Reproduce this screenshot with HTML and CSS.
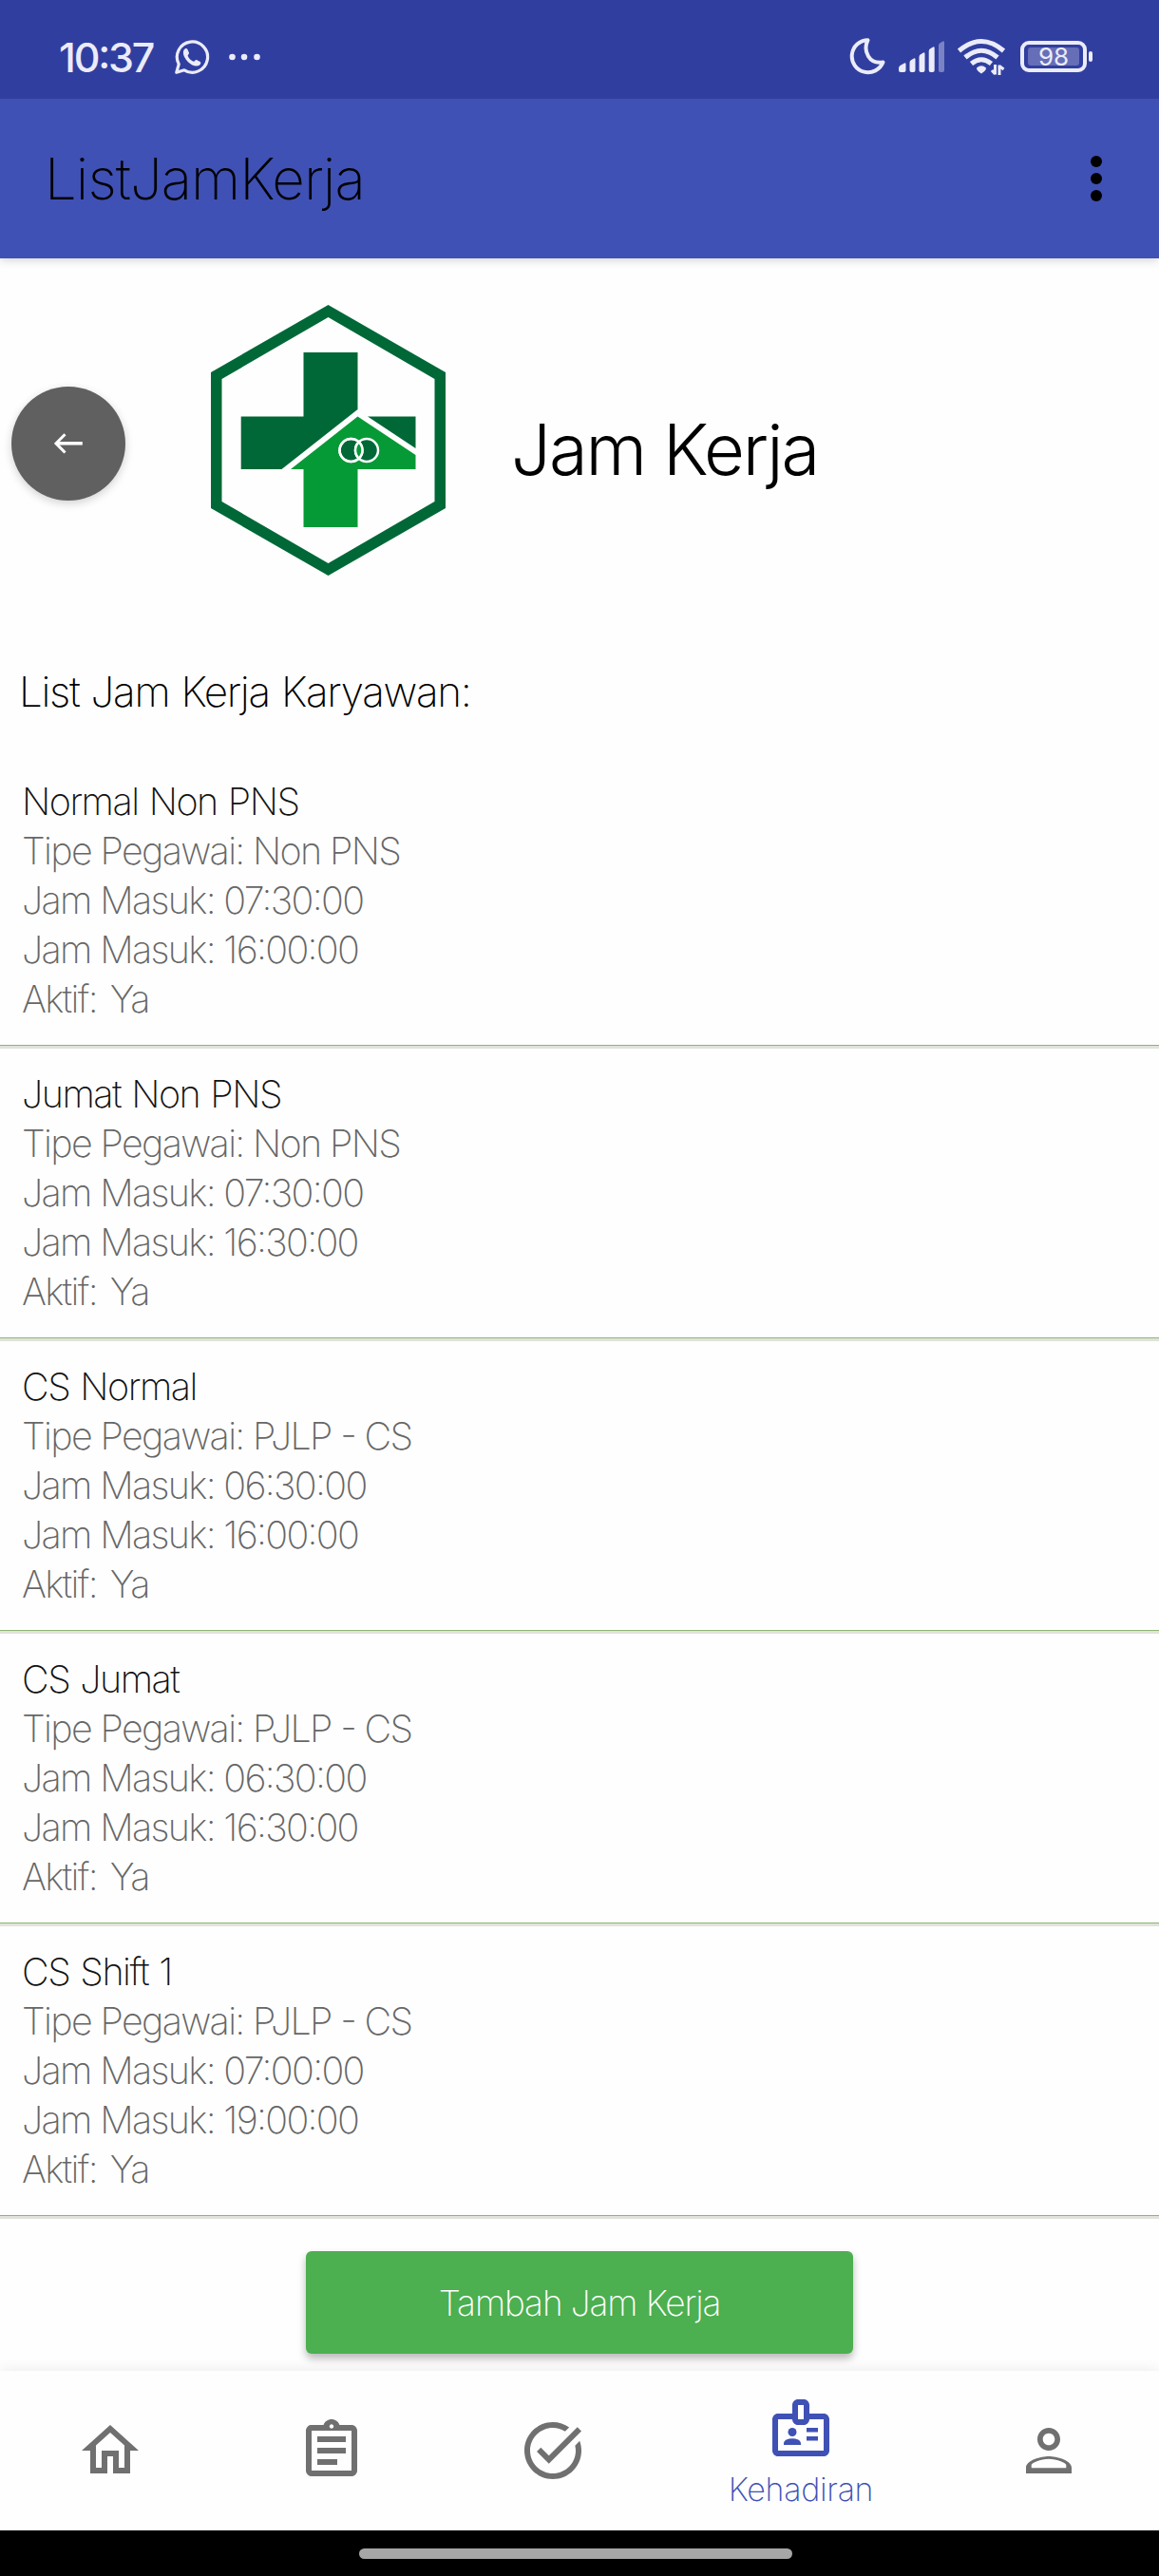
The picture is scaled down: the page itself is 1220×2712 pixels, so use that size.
FILE: index.html
```html
<!DOCTYPE html>
<html lang="id">
<head>
<meta charset="utf-8">
<title>ListJamKerja</title>
<link rel="stylesheet" href="styles.css">
</head>
<body>
<div class="screen">
  <header class="status">
    <div class="status-left">
      <span class="clock">10:37</span>
      <svg class="whatsapp" width="38" height="38" viewBox="0 0 38 38" fill="none" stroke="#ebebfa" stroke-width="3.2"><path d="M2.8 35.2 L5.2 26.6 A16.1 16.1 0 1 1 11 32.8 Z" stroke-linejoin="round"/><path d="M10.6 11.6c1-1.7 3-2.2 3.8-.6l1.6 3.6c.5 1.200-1.500 2.200-1.300 3.100 1 2.800 3.500 4.900 6 6 1.100.3 2-1.900 3.200-1.600l3.700 1.800c1.500.8.5 2.800-.9 3.800-3.200 2-8.200-.2-11.500-3.300-3.600-3.300-6.700-8.900-4.600-12.800z" fill="#ebebfa" stroke="none"/></svg>
      <svg width="34" height="8" viewBox="0 0 34 8" fill="#ebebfa"><circle cx="4.500" cy="4" r="3.300"/><circle cx="17" cy="4" r="3.300"/><circle cx="30.500" cy="4" r="3.300"/></svg>
    </div>
    <div class="status-right">
      <svg class="moon" width="40" height="42" viewBox="0 0 40 42"><path d="M19.500 3.200 C14 15 21 29 35.500 26.500 A17 17 0 1 1 19.500 3.200Z" fill="none" stroke="#ebebfa" stroke-width="4" stroke-linejoin="round"/></svg>
      <svg class="signal" width="50" height="34" viewBox="0 0 50 34" fill="#ebebfa"><path d="M0 29q0-2 1.500-3l4-2.300q2-1 2 1V31q0 2-2 2H2q-2 0-2-2z"/><path d="M11.500 23q0-2 1.500-2.800l2.500-1.500q2-1 2 1V31q0 2-2 2h-2q-2 0-2-2z"/><path d="M21.500 17q0-2 1.500-2.800l2.500-1.500q2-1 2 1V31q0 2-2 2h-2q-2 0-2-2z"/><path d="M31.700 11q0-2 1.500-2.800l2.500-1.500q2-1 2 1V31q0 2-2 2h-2q-2 0-2-2z"/><path opacity=".4" d="M42 5q0-2 1.500-2.800l2.500-1.500q2-1 2 1V31q0 2-2 2h-2q-2 0-2-2z"/></svg>
      <svg class="wifi" width="52" height="40" viewBox="0 0 52 40" fill="none" stroke="#ebebfa" stroke-width="5"><path d="M2.500 13.500 Q26 -6.500 49.500 13.500"/><path d="M9 20.500 Q26 6 43 20.500"/><path d="M15.500 27 Q26 18.500 36.500 27"/><path d="M21 31.500q5-4.500 10 0c0 3-3 4.500-5 6-2-1.500-5-3-5-6z" fill="#ebebfa" stroke="none"/><path d="M40.500 28v10.500M40.500 38l-3.500-4M45 39V28.500M45 29.500l4.500 3.500" stroke-width="3"/></svg>
      <div class="battery"><span class="charge">98</span></div>
      <span class="battery-tip"></span>
    </div>
  </header>

  <div class="appbar">
    <h1 class="appbar-title">ListJamKerja</h1>
    <svg width="12" height="48" viewBox="0 0 12 48"><circle cx="6" cy="6" r="6"/><circle cx="6" cy="24" r="6"/><circle cx="6" cy="42" r="6"/></svg>
  </div>

  <main class="content">
    <section class="hero">
      <button class="back" aria-label="Kembali">
        <svg width="30" height="22" viewBox="0 0 30 22" fill="none" stroke="#fff"><path d="M29.800 10.800H2.500" stroke-width="3.500"/><path d="M11.500 1.200 2 10.800 11.500 20.500" stroke-width="3"/></svg>
      </button>
      <svg class="logo" width="248" height="286" viewBox="0 0 248 286">
        <path fill="#006837" fill-rule="evenodd" d="M123.500 0 247 71V214L123.500 285 0 214V71zM123.500 13 11.500 78V207L123.500 272 235.500 207V78z"/>
        <path fill="#006837" d="M97.500 50h57v60L74.500 173H31.700V117.500H97.500zM165 117.500h50.500V151z"/>
        <path fill="#069a36" d="M154.500 117.500 215.500 158v15h-61v61h-57v-61H84z"/>
        <g fill="#006837" stroke="#fff" stroke-width="2.500"><circle cx="147.500" cy="153" r="12"/><circle cx="164" cy="153" r="12"/><circle cx="147.500" cy="153" r="12" fill="none"/></g>
        <path fill="#069a36" stroke="#fff" stroke-width="2.500" d="M155.750 144.300a12 12 0 0 1 0 17.400a12 12 0 0 1 0-17.400z"/>
      </svg>
      <h2 class="hero-title">Jam Kerja</h2>
    </section>

    <h3 class="list-heading">List Jam Kerja Karyawan:</h3>

    <ul class="shifts">
      <li class="shift"><p class="name">Normal Non PNS</p><p>Tipe Pegawai: Non PNS</p><p>Jam Masuk: 07:30:00</p><p>Jam Masuk: 16:00:00</p><p class="active">Aktif: Ya</p></li>
      <li class="shift"><p class="name">Jumat Non PNS</p><p>Tipe Pegawai: Non PNS</p><p>Jam Masuk: 07:30:00</p><p>Jam Masuk: 16:30:00</p><p class="active">Aktif: Ya</p></li>
      <li class="shift"><p class="name">CS Normal</p><p>Tipe Pegawai: PJLP - CS</p><p>Jam Masuk: 06:30:00</p><p>Jam Masuk: 16:00:00</p><p class="active">Aktif: Ya</p></li>
      <li class="shift"><p class="name">CS Jumat</p><p>Tipe Pegawai: PJLP - CS</p><p>Jam Masuk: 06:30:00</p><p>Jam Masuk: 16:30:00</p><p class="active">Aktif: Ya</p></li>
      <li class="shift"><p class="name">CS Shift 1</p><p>Tipe Pegawai: PJLP - CS</p><p>Jam Masuk: 07:00:00</p><p>Jam Masuk: 19:00:00</p><p class="active">Aktif: Ya</p></li>
    </ul>

    <div class="action"><button class="add">Tambah Jam Kerja</button></div>
  </main>

  <nav class="tabs">
    <a class="tab"><svg class="icon" viewBox="0 0 24 24"><path d="M12 5.690l5 4.500V18h-2v-6H9v6H7v-7.810l5-4.500M12 3L2 12h3v8h6v-6h2v6h6v-8h3L12 3z"/></svg></a>
    <a class="tab"><svg class="icon" viewBox="0 0 24 24"><path d="M7 15h7v2H7zm0-4h10v2H7zm0-4h10v2H7zm12-4h-4.180C14.400 1.840 13.300 1 12 1s-2.400.84-2.820 2H5c-.14 0-.27.01-.4.04-.39.08-.74.28-1.010.55-.18.18-.33.4-.43.64-.1.230-.16.490-.16.770v14c0 .27.06.540.16.780s.25.450.43.640c.27.270.62.470 1.010.55.130.02.260.03.400.03h14c1.100 0 2-.9 2-2V5c0-1.100-.9-2-2-2zm-7-.25c.41 0 .75.340.75.750s-.34.750-.75.750-.75-.34-.75-.75.340-.75.750-.75zM19 19H5V5h14v14z"/></svg></a>
    <a class="tab"><svg class="icon" viewBox="0 0 24 24"><path d="M22 5.180L10.590 16.600l-4.240-4.240 1.410-1.410 2.830 2.830 10-10L22 5.180zM19.790 10.220C19.920 10.790 20 11.390 20 12c0 4.420-3.580 8-8 8s-8-3.580-8-8c0-4.420 3.580-8 8-8 1.580 0 3.040.46 4.280 1.250l1.440-1.440C16.100 2.670 14.130 2 12 2 6.480 2 2 6.480 2 12c0 5.520 4.480 10 10 10s10-4.480 10-10c0-1.190-.22-2.330-.6-3.390L19.790 10.220z"/></svg></a>
    <a class="tab tab-active"><svg class="icon" viewBox="0 0 24 24"><path d="M20 7h-5V4c0-1.100-.9-2-2-2h-2c-1.100 0-2 .9-2 2v3H4c-1.100 0-2 .9-2 2v11c0 1.100.9 2 2 2h16c1.100 0 2-.9 2-2V9c0-1.100-.9-2-2-2zm-9-3h2v5h-2V4zm9 16H4V9h5c0 1.100.9 2 2 2h2c1.100 0 2-.9 2-2h5v11z"/><circle cx="9" cy="13.500" r="1.500"/><path d="M11.080 16.180C10.440 15.900 9.740 15.750 9 15.750s-1.440.15-2.080.43C6.360 16.420 6 16.960 6 17.570V18h6v-.43c0-.61-.36-1.150-.92-1.390zM14 12h4v1.500h-4zm0 3h4v1.500h-4z"/></svg><span class="label">Kehadiran</span></a>
    <a class="tab"><svg class="icon" viewBox="0 0 24 24"><path d="M12 5.900c1.160 0 2.100.94 2.100 2.100s-.94 2.100-2.100 2.100S9.900 9.160 9.900 8s.94-2.100 2.100-2.100m0 9c2.970 0 6.100 1.460 6.100 2.100v1.100H5.900V17c0-.64 3.130-2.100 6.100-2.100M12 4C9.790 4 8 5.790 8 8s1.790 4 4 4 4-1.790 4-4-1.790-4-4-4zm0 10c-2.670 0-8 1.340-8 4v2h16v-2c0-2.660-5.330-4-8-4z"/></svg></a>
  </nav>
  <footer class="gesture"><span class="pill"></span></footer>
</div>
</body>
</html>
```
FILE: styles.css
```css
* { box-sizing: border-box; margin: 0; padding: 0; }

body {
  background: #fefefe;
  font-family: Inter, "Noto Sans", sans-serif;
  font-weight: 200;
  font-feature-settings: "calt" 1;
}

button { border: 0; font: inherit; }

.screen {
  width: 1220px;
  height: 2712px;
  display: flex;
  flex-direction: column;
  overflow: hidden;
}

/* Status bar */
.status {
  position: relative;
  z-index: 1;
  height: 104px;
  flex: none;
  display: flex;
  justify-content: space-between;
  background: #303f9f;
  color: #ebebfa;
}
.status-left { display: flex; align-items: center; padding: 16px 0 0 62px; }
.clock { width: 121px; font-size: 43px; font-weight: 500; line-height: 52px; letter-spacing: -2.2px; white-space: nowrap; }
.whatsapp { margin-right: 19px; }
.status-right { display: flex; align-items: flex-start; padding: 40px 70px 0 0; }
.moon { margin-right: 12px; margin-top: -1px; }
.signal { margin: 3px 11px 0 0; }
.wifi { margin-right: 15px; }
.battery {
  width: 70px;
  height: 33px;
  margin-top: 3px;
  padding: 3px;
  border: 4px solid #ebebfa;
  border-radius: 9px;
}
.charge {
  display: block;
  height: 100%;
  margin: 0 1px;
  border-radius: 3px;
  background: #666eb7;
  font-size: 26px;
  font-weight: 400;
  line-height: 20px;
  text-align: center;
}
.battery-tip { width: 4px; height: 11px; margin: 14px 0 0 2px; border-radius: 2px; background: #ebebfa; }

/* App bar */
.appbar {
  height: 168px;
  flex: none;
  display: flex;
  align-items: center;
  justify-content: space-between;
  padding: 0 60px 0 47px;
  background: #3f51b5;
  box-shadow: 0 1px 10px rgba(0, 0, 0, .2);
}
.appbar-title { font-size: 60px; font-weight: 200; letter-spacing: -.95px; line-height: 72px; padding-bottom: 1px; }

/* Header */
.content { height: 2224px; flex: none; display: flex; flex-direction: column; }
.hero { height: 392px; display: flex; padding: 49px 0 0 12px; }
.back {
  width: 120px;
  height: 120px;
  margin-top: 86px;
  display: grid;
  place-items: center;
  border-radius: 50%;
  background: #606060;
  box-shadow: 0 3px 10px rgba(0, 0, 0, .18);
}
.logo { margin-left: 90px; }
.hero-title { margin: 107px 0 0 68px; font-size: 74px; font-weight: 300; line-height: 90px; letter-spacing: -2px; }

.list-heading { height: 132px; padding: 37px 0 0 20px; font-size: 44px; font-weight: 200; line-height: 54px; letter-spacing: -1.3px; word-spacing: 1px; }

/* Working hours */
.shifts { list-style: none; }
.shift {
  height: 308px;
  padding: 22px 0 0 23px;
  font-size: 39.5px;
  line-height: 52px;
  letter-spacing: -1.68px;
  color: #666;
  background: linear-gradient(#8fb573, #8fb573) 0 304px / 100% 1px no-repeat, linear-gradient(#dfe3da, #dfe3da) 0 305px / 100% 3px no-repeat;
}
.name { color: #111; letter-spacing: -1.5px; word-spacing: 1.5px; }
.active { word-spacing: 4.5px; }

.action { display: flex; justify-content: center; padding-top: 34px; }
.add {
  width: 576px;
  height: 108px;
  border-radius: 6px;
  background: #4caf50;
  color: #fff;
  font-size: 37px;
  letter-spacing: -1.1px;
  box-shadow: 0 5px 9px rgba(0, 0, 0, .28);
}

/* Bottom navigation */
.tabs {
  height: 168px;
  flex: none;
  display: grid;
  grid-template-columns: 232px 234px 232px 290px 232px;
  background: #fefefe;
  box-shadow: 0 0 14px rgba(0, 0, 0, .09);
  position: relative;
}
.tab { display: flex; flex-direction: column; align-items: center; padding-top: 48px; }
.icon { width: 72px; height: 72px; fill: #707070; }
.tab-active { padding-top: 24px; color: #3f51b5; }
.tab-active .icon { fill: #3f51b5; }
.label { margin-top: 9px; font-size: 34px; line-height: 40px; letter-spacing: -.3px; }

.gesture { height: 48px; flex: none; display: flex; justify-content: center; padding: 19px 8px 0 0; background: #000; position: relative; }
.pill { width: 456px; height: 11px; border-radius: 6px; background: #a6a6a6; }
```
